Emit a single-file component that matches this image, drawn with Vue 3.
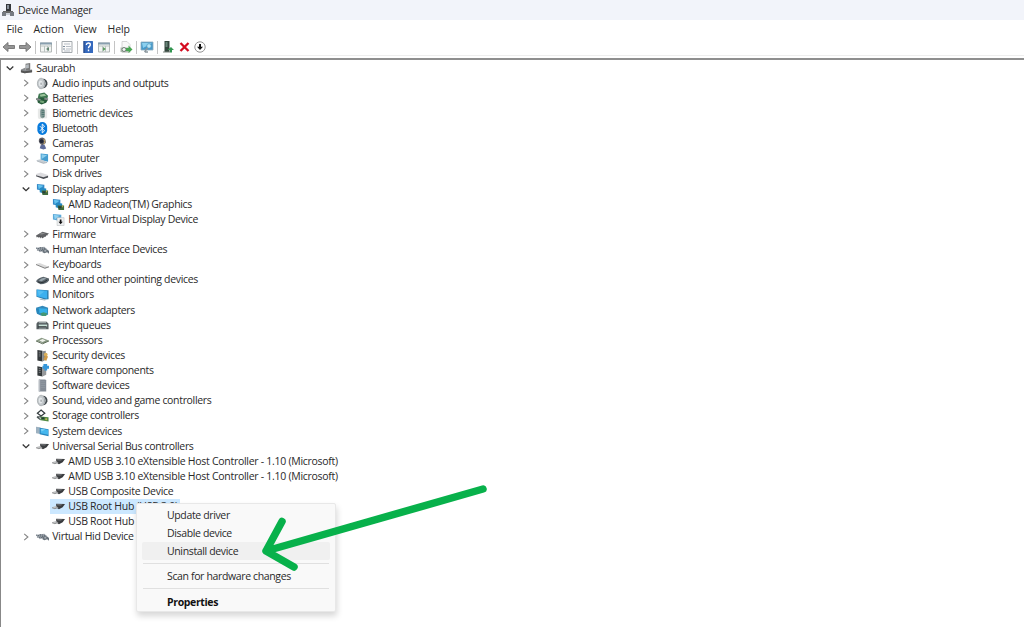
<script setup>
const tools = ['back', 'forward', '', 'console', '', 'sheet', '', 'help', 'panel', '', 'scan', '', 'monitor-search', '', 'update', 'remove', 'down']
const rows = [
  { t: 'Saurabh', i: 'pc', l: 0, o: 1 },
  { t: 'Audio inputs and outputs', i: 'speaker', l: 1 },
  { t: 'Batteries', i: 'battery', l: 1 },
  { t: 'Biometric devices', i: 'bio', l: 1 },
  { t: 'Bluetooth', i: 'bluetooth', l: 1 },
  { t: 'Cameras', i: 'camera', l: 1 },
  { t: 'Computer', i: 'computer', l: 1 },
  { t: 'Disk drives', i: 'disk', l: 1 },
  { t: 'Display adapters', i: 'display', l: 1, o: 1 },
  { t: 'AMD Radeon(TM) Graphics', i: 'display', l: 2 },
  { t: 'Honor Virtual Display Device', i: 'virtual', l: 2 },
  { t: 'Firmware', i: 'firmware', l: 1 },
  { t: 'Human Interface Devices', i: 'hid', l: 1 },
  { t: 'Keyboards', i: 'keyboard', l: 1 },
  { t: 'Mice and other pointing devices', i: 'mouse', l: 1 },
  { t: 'Monitors', i: 'monitor', l: 1 },
  { t: 'Network adapters', i: 'network', l: 1 },
  { t: 'Print queues', i: 'printer', l: 1 },
  { t: 'Processors', i: 'cpu', l: 1 },
  { t: 'Security devices', i: 'security', l: 1 },
  { t: 'Software components', i: 'component', l: 1 },
  { t: 'Software devices', i: 'software', l: 1 },
  { t: 'Sound, video and game controllers', i: 'speaker', l: 1 },
  { t: 'Storage controllers', i: 'storage', l: 1 },
  { t: 'System devices', i: 'system', l: 1 },
  { t: 'Universal Serial Bus controllers', i: 'usb', l: 1, o: 1 },
  { t: 'AMD USB 3.10 eXtensible Host Controller - 1.10 (Microsoft)', i: 'usb', l: 2, wide: 1 },
  { t: 'AMD USB 3.10 eXtensible Host Controller - 1.10 (Microsoft)', i: 'usb', l: 2, wide: 1 },
  { t: 'USB Composite Device', i: 'usb', l: 2, wide: 1 },
  { t: 'USB Root Hub (USB 3.0)', i: 'usb', l: 2, sel: 1, wide: 1 },
  { t: 'USB Root Hub', i: 'usb', l: 2, wide: 1 },
  { t: 'Virtual Hid Device', i: 'hid', l: 1, wide: 1 },
]
</script>

<template>
  <div class="window">
    <svg class="defs" width="0" height="0">
      <symbol id="i-app" viewBox="0 0 14 14"><path d="M5 1h5v7H5z" fill="#34373b" /><path d="M6 2h2v4H6z" fill="#8a929c" /><path d="M2 8h10v2H2z" fill="#666" /><path d="M1 9h4v4H1zM9 9h4v4H9z" fill="#777b82" /><path d="M5 10h4v2H5z" fill="#c9ced6" /></symbol>
      <symbol id="i-pc" viewBox="0 0 14 14"><path d="M6 2l5-1v8l-5 1z" fill="#777" /><path d="M6.500 3l3-.6v4l-3 .6z" fill="#b5bbc0" /><path d="M1 8l5-2v3l7-1v3l-8 1-4-1z" fill="#8a8d90" /><path d="M1 9l4 1 8-1v2l-8 1-4-1z" fill="#555" /></symbol>
      <symbol id="i-speaker" viewBox="0 0 14 14"><path d="M8 1.500q5 1.500 4.300 6.500-.8 3.500-4.300 4.500z" fill="#41484d" /><path d="M8.800 3.500q2.500 3.500 0 7" stroke="#e6eaed" fill="none" /><ellipse cx="5.500" cy="7" rx="4" ry="5.700" fill="#c3c8cb" stroke="#8c9296" stroke-width=".6" /><ellipse cx="5" cy="7" rx="2" ry="3.200" fill="#e4e8ea" /><ellipse cx="5.500" cy="7.200" rx=".8" ry="1.400" fill="#a1a6a9" /></symbol>
      <symbol id="i-battery" viewBox="0 0 14 14"><path d="M3 2l6-1.500L13 4l-1 4-8 1-2-3z" fill="#3d7650" /><path d="M4 3l5-1 2 2-6 1z" fill="#9ac49b" /><path d="M1 7l5-1 7 2-2 3.500L6 13.500l-4-2z" fill="#285c3c" /><path d="M0 7.500l5 1M9 7l4 1" stroke="#85888a" stroke-width="2" /><path d="M5 9l4 1-1 2-4-1z" fill="#75a678" /></symbol>
      <symbol id="i-bio" viewBox="0 0 14 14"><path d="M2 2l8-1 2 2v9l-9 1-1-2z" fill="#e7e9e8" /><rect x="4.500" y="2" width="5" height="10" rx="2.300" fill="#849b98" /><path d="M6 4h3M6 6h3M6 8h3M7 10h2" stroke="#4b716d" /></symbol>
      <symbol id="i-bluetooth" viewBox="0 0 14 14"><rect x="1.500" y="0" width="10.500" height="14" rx="5.200" fill="#087bdd" /><path d="M4.200 4.500l5 5-2.500 2.300V2.200l2.500 2.300-5 5" fill="none" stroke="#fff" stroke-width="1" /></symbol>
      <symbol id="i-camera" viewBox="0 0 14 14"><path d="M3 4q0-3.500 4-3.500 4 1 3.500 6L7 9Q3 7 3 4" fill="#5c5b63" /><circle cx="6" cy="4.500" r="2" fill="#202637" /><path d="M8.500 2q2 3 0 6" stroke="#c6a864" fill="none" /><path d="M5 9l4-1 2 4.500-3 1-4-1.500z" fill="#5c6a99" /></symbol>
      <symbol id="i-computer" viewBox="0 0 14 14"><path d="M5 1.500l8 1v8l-8-2z" fill="#459dd0" /><path d="M6 2.500l6 1-6 4z" fill="#8cceed" /><path d="M0 9l5-1.200 7 3L8 12z" fill="#c6cdd3" /><path d="M1 9.700l7 2.500 4-1" stroke="#8b949e" fill="none" stroke-width=".7" /></symbol>
      <symbol id="i-disk" viewBox="0 0 14 14"><path d="M0 7.500l5-1.500 8 2.500v1.500l-4 2-9-3z" fill="#dcdcdf" /><path d="M0 9l8 2 5-1.500v1.700L8 13l-8-3z" fill="#4b4e54" /></symbol>
      <symbol id="i-display" viewBox="0 0 14 14"><path d="M1 1l8 1v7L1 7z" fill="#3489c7" /><path d="M2 2l6 1-5 4z" fill="#65c5f0" /><path d="M4 5l7 1v6L4 10z" fill="#248ac4" /><path d="M6 8h7v5H7z" fill="#416c3d" /><path d="M7 9h3v2H7z" fill="#263b3e" /><path d="M11 8h1v2h-1z" fill="#d3b64f" /></symbol>
      <symbol id="i-virtual" viewBox="0 0 14 14"><path d="M1 1l9 1v7L1 7z" fill="#5ba8d8" /><path d="M2 2l6 1-5 4z" fill="#8fd2f2" /><path d="M5.500 5h7.500v8.500H5.500z" fill="#eff0f1" stroke="#aeb2b5" stroke-width=".5" /><path d="M9.300 7v3" stroke="#111" stroke-width="1.800" /><path d="M7 9.500h4.600l-2.300 2.600z" fill="#111" /></symbol>
      <symbol id="i-firmware" viewBox="0 0 14 14"><path d="M0 8l7-4 7 2-6 4.500-7-1z" fill="#626366" /><path d="M3 6.500l4-1.500 3 1-4 1z" fill="#8e8f90" /><path d="M1 8.500v1.500M3 9v1.500M5 9v2M7 9.500v1.500M10 8v1.500M12 7v1" stroke="#414346" stroke-width=".8" /></symbol>
      <symbol id="i-hid" viewBox="0 0 14 14"><path d="M0 5l9-1 3 3-8 3z" fill="#a5abb2" /><path d="M0 5.500l10 2M4 5l7 1M1 7.500l7 1" stroke="#54606b" stroke-dasharray="1.500 .7" /><path d="M7 7.500q5-2 7 1v3l-2-1.500-3 1-2-1z" fill="#68717a" /><path d="M9 8.500h2" stroke="#d5dbe0" /></symbol>
      <symbol id="i-keyboard" viewBox="0 0 14 14"><path d="M0 6.500l4-1 10 4-4 2z" fill="#dadada" /><path d="M0 7l9.500 4 4.500-1.500" fill="none" stroke="#777" /></symbol>
      <symbol id="i-mouse" viewBox="0 0 14 14"><path d="M0 9q2-4 8-5l6 2v2q-3 4-9 4-4-1-5-3" fill="#59636a" /><path d="M3 8q3-3 6-3l2 1-5 3z" fill="#98a5ac" /><path d="M2 9.500l3 1q4 0 7-3" fill="none" stroke="#262d31" /></symbol>
      <symbol id="i-monitor" viewBox="0 0 14 14"><path d="M.5 1.500l13 1V12L9.500 12.500.5 9.500z" fill="#2c7dad" /><path d="M1 2l11 1v8.500L1 9z" fill="#3bb0ef" /><path d="M2 3l7 .8-6 4.500z" fill="#72cef6" opacity=".5" /><path d="M4 12l6 1" stroke="#9eafb8" /></symbol>
      <symbol id="i-network" viewBox="0 0 14 14"><path d="M0 4l7-2 6 2v7.500L5 12.500 1 10.500z" fill="#3389ba" /><path d="M3 4.500l9 .5v5.500l-9-1z" fill="#35b0ea" /><path d="M0 5l3.500 1v5L1 10z" fill="#2786bc" /><path d="M5 10l3-1 4 1-1 3H6z" fill="#439776" /></symbol>
      <symbol id="i-printer" viewBox="0 0 14 14"><path d="M2 3h9.500l2 2v6H.5V5z" fill="#555d60" /><path d="M3 3h8v1.500H3z" fill="#9ba4a5" /><path d="M3 6h9v2H3z" fill="#c9e2d9" /><path d="M2 8.500h9" stroke="#292f31" /><path d="M3 9.300h8v1H3z" fill="#a1aaad" /></symbol>
      <symbol id="i-cpu" viewBox="0 0 14 14"><path d="M0 7l6-3 8 3-6 3.300z" fill="#8a9a85" /><path d="M0 7.500l7 3 7-3" stroke="#53634e" fill="none" /><path d="M3.500 7L7 5.500 10.500 7 7 8.500z" fill="#eef0ea" /></symbol>
      <symbol id="i-security" viewBox="0 0 14 14"><path d="M1.500 1l5.500 1v11.500l-5.500-1z" fill="#34393b" /><path d="M7 2.500L10.500 2v9.500L7 13.500z" fill="#85898a" /><path d="M3 3.500h2M3 5.500h2M3 7.500h2" stroke="#a1a6a8" stroke-width=".7" /><circle cx="10.500" cy="6" r="2" fill="#dcb059" /><path d="M10 7l3 1-2 5-3-2z" fill="#cf9a45" /></symbol>
      <symbol id="i-component" viewBox="0 0 14 14"><path d="M1.500 2.500l5.500 1v10l-5.500-1z" fill="#34393b" /><path d="M7 4l4-1v8.500l-4 2z" fill="#96999b" /><path d="M3 5h2M3 7h2M3 9h2" stroke="#a1a6a8" stroke-width=".7" /><path d="M8 0h4v2h2v3h-2v2H9V5H7V2h1z" fill="#3597da" /></symbol>
      <symbol id="i-software" viewBox="0 0 14 14"><path d="M3 .5h7l1 1v12H3z" fill="#838b95" /><path d="M3 .5h1.500v13H3z" fill="#b8bdc3" /><path d="M5 3h5M5 5h5M5 7h5M5 9h5" stroke="#98a1aa" stroke-width=".6" /></symbol>
      <symbol id="i-storage" viewBox="0 0 14 14"><path d="M1.500 4.500L5.500 1l4 3.500-4 3z" fill="#fff" stroke="#333b3e" stroke-width="1.300" /><path d="M5 7v1.500H1M1 8.500l4 3" stroke="#4c5556" stroke-width="1.300" fill="none" /><path d="M5 8l8.500 1v4.500L5 12z" fill="#4d8842" /><path d="M6 9h3v2H6z" fill="#263b36" /><path d="M10 10h2v2h-2z" fill="#c0b755" /></symbol>
      <symbol id="i-system" viewBox="0 0 14 14"><path d="M0 2l4 .5 2 1v6.500L0 9z" fill="#9db1c0" /><path d="M4 3l9.500 1.500V12L4 10z" fill="#2684bc" /><path d="M5 4l8 1v5.500L5 9z" fill="#45b7ee" /><path d="M5 4l5 .8L6 7z" fill="#7ad2f5" /></symbol>
      <symbol id="i-usb" viewBox="0 0 14 14"><path d="M4.500 4l9.500.2-2.500 3.600L7.500 10l-3-2z" fill="#3a3c3f" /><path d="M5.500 4.700l6 .1-2 1-4-.1z" fill="#7f8183" /><path d="M0 7.700L4 6.500 7 8l-4 1.500z" fill="#c0c2c3" /><path d="M0 8.300l3 1 3-1" stroke="#717374" fill="none" stroke-width=".8" /></symbol>

      <symbol id="i-back" viewBox="0 0 16 16"><path d="M2 8l5-4.500v3h6.500v3H7v3z" fill="#969696" stroke="#737373" stroke-width=".9" /></symbol>
      <symbol id="i-forward" viewBox="0 0 16 16"><path d="M14 8L9 3.500v3H2.500v3H9v3z" fill="#969696" stroke="#737373" stroke-width=".9" /></symbol>
      <symbol id="i-console" viewBox="0 0 16 16"><path d="M2.500 4h11v9h-11z" fill="#f3f5f3" stroke="#b4b9b8" /><path d="M2 4.500h12" stroke="#899fae" stroke-width="2" /><path d="M3 7h10M6.500 7v6M9.500 7v6" stroke="#bbc4c2" /><path d="M11 8v4L8 10z" fill="#60836e" /></symbol>
      <symbol id="i-sheet" viewBox="0 0 16 16"><path d="M3 2.500h10v11H3z" fill="#fafafa" stroke="#a5aaae" /><path d="M5 5h6M7 7.500h5M7 10h5M5 12h6" stroke="#b7bec6" /><path d="M4 7.500h2M4 10h2" stroke="#7e8e9d" /></symbol>
      <symbol id="i-help" viewBox="0 0 16 16"><rect x="3.500" y="2" width="9.500" height="12" rx=".5" fill="#3569bd" /><path d="M4 2v12" stroke="#24427d" /><path d="M6.300 6q.2-2 2-2 2 0 2 1.700 0 1-1 1.700-.8.600-.8 1.800M8.500 10.500v1.700" fill="none" stroke="#fff" stroke-width="1.400" /></symbol>
      <symbol id="i-panel" viewBox="0 0 16 16"><path d="M2.500 4h11v9h-11z" fill="#f3f5f3" stroke="#b4b9b8" /><path d="M2 4.500h12" stroke="#899fae" stroke-width="2" /><path d="M3 7h10M6.500 7v6M9.500 7v6" stroke="#bbc4c2" /><path d="M7 8v4l3-2z" fill="#5c9f60" /></symbol>
      <symbol id="i-scan" viewBox="0 0 16 16"><path d="M4 2.500h5l3 3v8H4z" fill="#f8f8f7" stroke="#ccc" stroke-width=".8" /><path d="M2.500 8.500h8V13h-8z" fill="#b0bbb0" /><circle cx="6" cy="10.500" r="2" fill="#f2f5f2" stroke="#718077" /><path d="M8 9h2.500V6.500l4 4-4 3.500v-2H8z" fill="#48a651" /></symbol>
      <symbol id="i-monitor-search" viewBox="0 0 16 16"><path d="M2 3h12v8H2z" fill="#4799ca" stroke="#91acbc" stroke-width=".8" /><path d="M3 4h10L4 9z" fill="#8bd0ef" /><circle cx="10" cy="7" r="2.300" fill="#b8e5f6" stroke="#4c9bc4" stroke-width=".8" /><path d="M8.500 9l-3 4M6 13h3" stroke="#8b969d" stroke-width="1.300" /></symbol>
      <symbol id="i-update" viewBox="0 0 16 16"><path d="M4.500 2h5v11h-5z" fill="#35473e" /><path d="M5.500 3h2v5h-2z" fill="#688478" /><path d="M3 13h7" stroke="#78827c" /><path d="M7.500 11L11 8l3 3h-2v2.500h-2V11z" fill="#329550" /></symbol>
      <symbol id="i-remove" viewBox="0 0 16 16"><path d="M4.500 4l8 8M12.500 4l-8 8" stroke="#d40c20" stroke-width="2.300" /></symbol>
      <symbol id="i-down" viewBox="0 0 16 16"><circle cx="8" cy="8" r="5.200" fill="#fff" stroke="#888" stroke-width=".9" /><path d="M8 5v4" stroke="#111" stroke-width="2" /><path d="M5 7.700h6L8 11z" fill="#111" /></symbol>
    </svg>

    <header class="title"><svg class="app-icon"><use href="#i-app" /></svg><span>Device Manager</span></header>
    <nav class="menu"><span class="file">File</span><span class="action">Action</span><span class="view">View</span><span>Help</span></nav>
    <div class="toolbar">
      <template v-for="(n, k) in tools" :key="k">
        <svg v-if="n" class="tool"><use :href="'#i-' + n" /></svg>
        <i v-else class="sep"></i>
      </template>
    </div>
    <main class="tree">
      <div v-for="(r, k) in rows" :key="k" class="row" :class="['l' + r.l, { wide: r.wide }]">
        <svg class="chev" viewBox="0 0 10 10">
          <path v-if="r.o" d="M1.700 3.500L5 6.700l3.300-3.200" class="open" />
          <path v-else-if="r.l === 1" d="M3.200 1.900L6.900 5 3.200 8.100" class="closed" />
        </svg>
        <div class="item" :class="{ sel: r.sel }"><svg class="icon"><use :href="'#i-' + r.i" /></svg><span class="label">{{ r.t }}</span></div>
      </div>
    </main>

    <div class="context">
      <div class="opt">Update driver</div>
      <div class="opt">Disable device</div>
      <div class="opt hover">Uninstall device</div>
      <hr>
      <div class="opt">Scan for hardware changes</div>
      <hr>
      <div class="opt bold">Properties</div>
    </div>
    <svg class="arrow" viewBox="0 0 240 100"><path d="M233 14L16 76M32 46.500L16 76l28 16" /></svg>
  </div>
</template>

<style>
body { margin: 0; background: #fff; overflow: hidden; }
</style>
<style scoped>
.window { position: relative; width: 1024px; height: 627px; overflow: hidden; background: #fff; color: #292929; font: 10.5px/15px "Open Sans", "Noto Sans", sans-serif; letter-spacing: -.1px; display: flex; flex-direction: column; white-space: nowrap; }
.defs { position: absolute; }
.title { height: 20px; flex: none; background: #f2f4fa; display: flex; align-items: center; padding-left: 1px; gap: 3px; box-sizing: border-box; letter-spacing: -.3px; }
.app-icon { width: 14px; height: 14px; }
.menu { height: 19px; flex: none; display: flex; align-items: center; padding-left: 6.500px; }
.file { width: 27px; }
.action { width: 40.500px; }
.view { width: 33.500px; }
.toolbar { height: 16px; flex: none; display: flex; align-items: center; padding-left: .5px; border-bottom: 1px solid #eee; }
.tool { width: 16px; height: 16px; flex: none; }
.sep { width: 5.300px; height: 13px; flex: none; background: linear-gradient(#c4c4c4, #c4c4c4) 2px 0 / 1px 100% no-repeat; }
.tree { flex: 1; margin-top: 2px; border-top: 2px solid #8f8f8f; border-left: 1px solid #888; padding: .500px 0 0 4px; letter-spacing: -.33px; }
.row { height: 15.125px; display: flex; align-items: center; }
.wide { letter-spacing: -.28px; }
.l1 { padding-left: 16px; }
.l2 { padding-left: 32px; }
.chev { width: 10px; height: 10px; flex: none; margin-right: 3px; fill: none; }
.open { stroke: #333; stroke-width: 1.300; }
.closed { stroke: #858585; stroke-width: 1.100; }
.item { display: flex; align-items: center; height: 15px; padding: 0 2px; }
.sel { background: #cce8ff; }
.icon { width: 13px; height: 13px; flex: none; margin-right: 3.300px; overflow: visible; }
.context { position: absolute; left: 136px; top: 503px; width: 200px; height: 109px; box-sizing: border-box; border: 1px solid #e8e8e8; border-radius: 2px; background: #f9f9f9; box-shadow: 1px 4px 6px rgba(0,0,0,.16); padding: 1.500px 5px; letter-spacing: -.36px; }
.opt { height: 18px; line-height: 18px; padding-left: 25px; }
.hover { background: #f0f0f0; border-radius: 2px; }
.context hr { margin: 3px 1px 3.500px; border: 0; height: 1px; background: #e0e0e0; }
.bold { font-weight: 700; color: #111; }
.arrow { position: absolute; left: 250px; top: 475px; width: 240px; height: 100px; fill: none; stroke: #08b14b; stroke-width: 7.500; stroke-linecap: round; stroke-linejoin: round; }
</style>
